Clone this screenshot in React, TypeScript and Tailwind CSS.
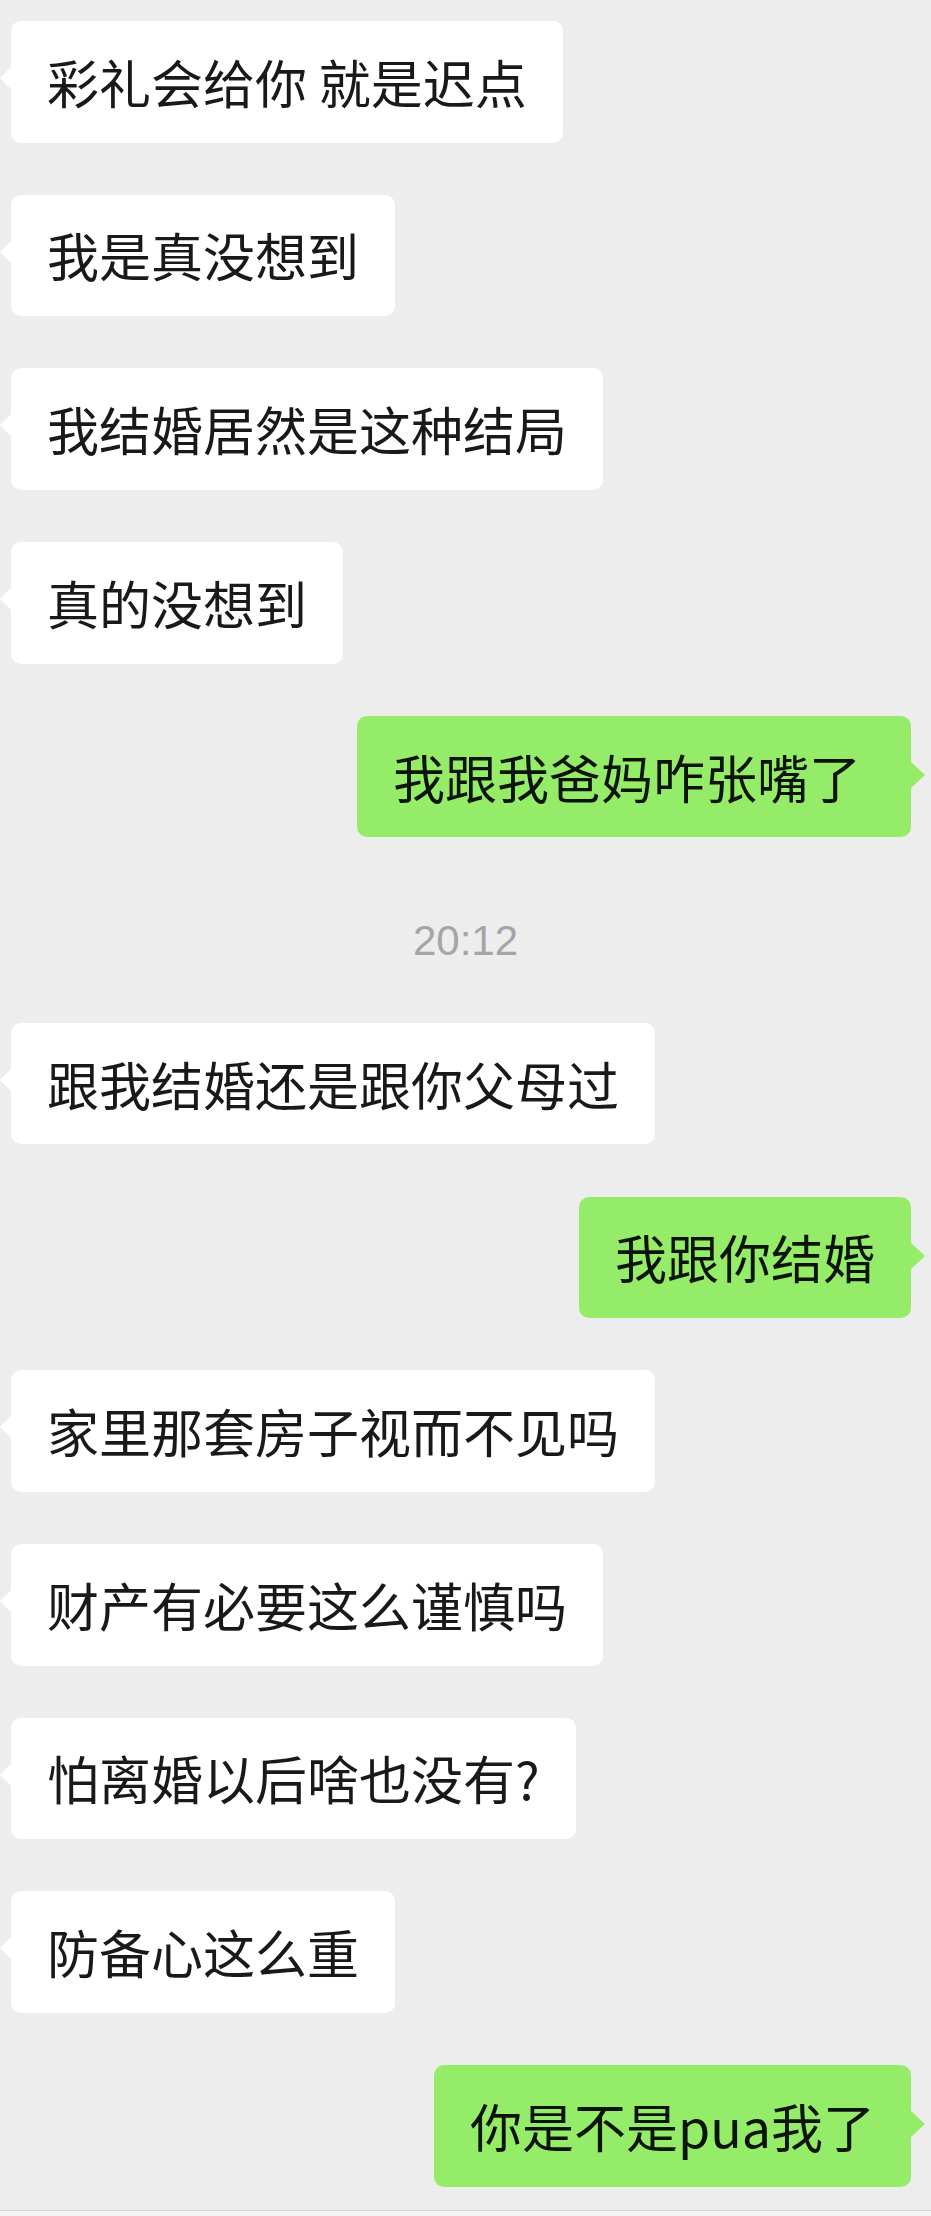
type Msg =
  | { kind: "in"; text: string }
  | { kind: "out"; text: string; wide?: boolean }
  | { kind: "time"; text: string };

const messages: Msg[] = [
  { kind: "in", text: "彩礼会给你 就是迟点" },
  { kind: "in", text: "我是真没想到" },
  { kind: "in", text: "我结婚居然是这种结局" },
  { kind: "in", text: "真的没想到" },
  { kind: "out", text: "我跟我爸妈咋张嘴了", wide: true },
  { kind: "time", text: "20:12" },
  { kind: "in", text: "跟我结婚还是跟你父母过" },
  { kind: "out", text: "我跟你结婚" },
  { kind: "in", text: "家里那套房子视而不见吗" },
  { kind: "in", text: "财产有必要这么谨慎吗" },
  { kind: "in", text: "怕离婚以后啥也没有?" },
  { kind: "in", text: "防备心这么重" },
  { kind: "out", text: "你是不是pua我了" },
];

const cjk = "font-['Noto_Sans_CJK_SC','Noto_Sans',sans-serif]";

function Bubble({ text, mine, wide }: { text: string; mine: boolean; wide?: boolean }) {
  return (
    <div className={`flex ${mine ? "justify-end pr-[20px]" : "justify-start pl-[11px]"}`}>
      <div
        className={`relative flex h-[121.5px] items-center whitespace-nowrap rounded-[10px] text-[52px] leading-[62px] ${cjk} ${
          wide ? "pl-[36px] pr-[50px]" : "px-[36px]"
        } ${mine ? "bg-[#95ec69] text-[#0c1408]" : "bg-white text-[#191919]"}`}
      >
        {/* tail */}
        {mine ? (
          <span className="absolute right-[-14px] top-[45px] h-0 w-0 border-y-[14px] border-l-[15px] border-y-transparent border-l-[#95ec69]" />
        ) : (
          <span className="absolute left-[-11px] top-[46px] h-0 w-0 border-y-[11px] border-r-[11px] border-y-transparent border-r-white" />
        )}
        {text}
      </div>
    </div>
  );
}

export default function App() {
  return (
    <div className="flex h-[2216px] w-[931px] flex-col overflow-hidden bg-[#ededed]">
      <div className="flex flex-col pt-[21px]">
        {messages.map((m, i) => {
          if (m.kind === "time") {
            return (
              <div
                key={i}
                className="flex h-[185.7px] justify-center pt-[83px] font-['Liberation_Sans',Arial,sans-serif] text-[42px] leading-[42px] text-[#a5a5a5]"
              >
                {m.text}
              </div>
            );
          }
          const next = messages[i + 1];
          return (
            <div key={i} className={next && next.kind !== "time" ? "mb-[52.2px]" : ""}>
              <Bubble text={m.text} mine={m.kind === "out"} wide={m.kind === "out" && m.wide} />
            </div>
          );
        })}
      </div>
      <div className="mt-auto h-[6px] border-t border-[#d4d4d4] bg-[#f4f4f4]" />
    </div>
  );
}
